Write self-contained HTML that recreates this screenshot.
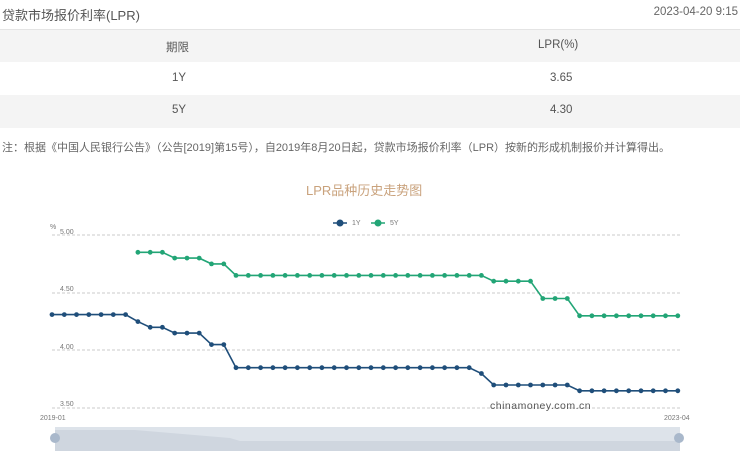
<!DOCTYPE html>
<html><head><meta charset="utf-8"><style>
body{margin:0;width:740px;height:467px;background:#fff;font-family:"Liberation Sans","Noto Sans CJK SC",sans-serif;position:relative;overflow:hidden;color:#555}
.a{position:absolute;white-space:nowrap}
</style></head><body>
<div class="a" style="left:2px;top:5px;font-size:13px;color:#555">贷款市场报价利率(LPR)</div>
<div class="a" style="right:2px;top:6px;font-size:11.5px;color:#666">2023-04-20 9:15</div>
<div class="a" style="left:0;top:29px;width:740px;height:1px;background:#e4e4e4"></div>
<div class="a" style="left:0;top:30px;width:740px;height:32px;background:#f4f4f4"></div>
<div class="a" style="left:0;top:95px;width:740px;height:33px;background:#f4f4f4"></div>
<div class="a" style="left:166px;top:39px;font-size:11.5px">期限</div>
<div class="a" style="left:538px;top:39px;font-size:11.5px">LPR(%)</div>
<div class="a" style="left:172px;top:72px;font-size:11.5px">1Y</div>
<div class="a" style="left:550px;top:72px;font-size:11.5px">3.65</div>
<div class="a" style="left:172px;top:104px;font-size:11.5px">5Y</div>
<div class="a" style="left:550px;top:104px;font-size:11.5px">4.30</div>
<div class="a" style="left:2px;top:139px;font-size:11px;color:#666">注：根据《中国人民银行公告》（公告[2019]第15号），自2019年8月20日起，贷款市场报价利率（LPR）按新的形成机制报价并计算得出。</div>
<div class="a" style="left:306px;top:180px;font-size:13px;color:#c9a27c">LPR品种历史走势图</div>
<svg class="a" style="left:0;top:0" width="740" height="467" id="s">
<g stroke="#bbb" stroke-dasharray="3,2" stroke-width="0.8">
<line x1="52" x2="680" y1="235" y2="235"/><line x1="52" x2="680" y1="293" y2="293"/><line x1="52" x2="680" y1="350" y2="350"/><line x1="52" x2="680" y1="408" y2="408"/></g>
<g font-size="7" fill="#777" font-family="Liberation Sans">
<text x="50" y="229">%</text><text x="60" y="234">5.00</text><text x="60" y="291">4.50</text><text x="60" y="349">4.00</text><text x="60" y="406">3.50</text>
<text x="40" y="420">2019-01</text><text x="664" y="420">2023-04</text>
<text x="352" y="225">1Y</text><text x="390" y="225">5Y</text></g>
<line x1="333" x2="347" y1="223" y2="223" stroke="#1f4e7a" stroke-width="1.5"/><circle cx="340" cy="223" r="3.5" fill="#1f4e7a"/>
<line x1="371" x2="385" y1="223" y2="223" stroke="#22a576" stroke-width="1.5"/><circle cx="378" cy="223" r="3.5" fill="#22a576"/>
<rect x="55" y="427" width="625" height="24" fill="#dde3ea"/>
<path d="M55 430 L135 430 L230 438 L240 441 L680 441 L680 451 L55 451Z" fill="#cfd6df"/>
<circle cx="55" cy="438" r="5" fill="#a9b8cb"/><circle cx="679" cy="438" r="5" fill="#a9b8cb"/>
<text x="490" y="409" font-size="10.5" fill="#555" font-family="Liberation Sans" letter-spacing="0.5">chinamoney.com.cn</text>
<g id="g"></g>
</svg>
<script>
var a=[],b=[];
for(var i=0;i<7;i++)a.push(4.31);
a=a.concat([4.25,4.20,4.20,4.15,4.15,4.15,4.05,4.05]);
while(a.length<35)a.push(3.85);
a.push(3.80);while(a.length<43)a.push(3.70);while(a.length<52)a.push(3.65);
b=[4.85,4.85,4.85,4.80,4.80,4.80,4.75,4.75];
while(b.length<29)b.push(4.65);while(b.length<33)b.push(4.60);b=b.concat([4.45,4.45,4.45]);while(b.length<45)b.push(4.30);
function Y(v){return 235+(5-v)*115.4}function X(i){return 52+i*12.27}
var h='';
function s(arr,off,c){var p='';arr.forEach(function(v,i){p+=(i?'L':'M')+X(i+off).toFixed(1)+' '+Y(v).toFixed(1)});h+='<path d="'+p+'" fill="none" stroke="'+c+'" stroke-width="1.6"/>';arr.forEach(function(v,i){h+='<circle cx="'+X(i+off).toFixed(1)+'" cy="'+Y(v).toFixed(1)+'" r="2.4" fill="'+c+'"/>'})}
s(b,7,'#22a576');s(a,0,'#1f4e7a');
document.getElementById('g').innerHTML=h;
</script>
</body></html>
